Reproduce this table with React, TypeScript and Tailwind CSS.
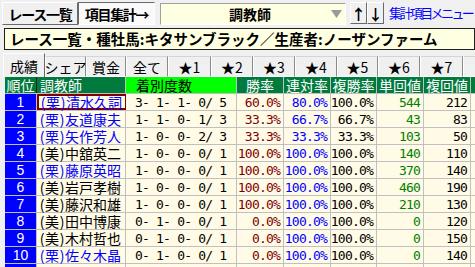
const rows = [
  { n: 1, t: "栗", name: "清水久詞", rec: "3- 1- 1- 0/ 5", w: "60.0%", r: "80.0%", p: "100.0%", tan: "544", fuku: "212" },
  { n: 2, t: "栗", name: "友道康夫", rec: "1- 1- 0- 1/ 3", w: "33.3%", r: "66.7%", p: "66.7%", tan: "43", fuku: "83" },
  { n: 3, t: "栗", name: "矢作芳人", rec: "1- 0- 0- 2/ 3", w: "33.3%", r: "33.3%", p: "33.3%", tan: "103", fuku: "50" },
  { n: 4, t: "美", name: "中舘英二", rec: "1- 0- 0- 0/ 1", w: "100.0%", r: "100.0%", p: "100.0%", tan: "140", fuku: "110" },
  { n: 5, t: "栗", name: "藤原英昭", rec: "1- 0- 0- 0/ 1", w: "100.0%", r: "100.0%", p: "100.0%", tan: "370", fuku: "140" },
  { n: 6, t: "美", name: "岩戸孝樹", rec: "1- 0- 0- 0/ 1", w: "100.0%", r: "100.0%", p: "100.0%", tan: "460", fuku: "190" },
  { n: 7, t: "美", name: "藤沢和雄", rec: "1- 0- 0- 0/ 1", w: "100.0%", r: "100.0%", p: "100.0%", tan: "210", fuku: "130" },
  { n: 8, t: "美", name: "田中博康", rec: "0- 1- 0- 0/ 1", w: "0.0%", r: "100.0%", p: "100.0%", tan: "0", fuku: "120" },
  { n: 9, t: "美", name: "木村哲也", rec: "0- 1- 0- 0/ 1", w: "0.0%", r: "100.0%", p: "100.0%", tan: "0", fuku: "150" },
  { n: 10, t: "栗", name: "佐々木晶", rec: "0- 1- 0- 0/ 1", w: "0.0%", r: "100.0%", p: "100.0%", tan: "0", fuku: "140" },
];

const tabs = [
  { label: "シェア", w: "w-[41px]" },
  { label: "賞金", w: "w-[40px]" },
  { label: "全て", w: "w-[42px]" },
  { label: "★1", w: "w-[43px]" },
  { label: "★2", w: "w-[42px]" },
  { label: "★3", w: "w-[42px]" },
  { label: "★4", w: "w-[42px]" },
  { label: "★5", w: "w-[41px]" },
  { label: "★6", w: "w-[42px]" },
  { label: "★7", w: "w-[43px]" },
  { label: "★", w: "w-[42px]" },
];

const mono = "font-['DejaVu_Sans_Mono',monospace] text-[13px] tracking-[-0.8px]";

export default function App() {
  return (
    <div className="w-[475px] h-[267px] overflow-hidden bg-[#f0f0f0] text-black font-['Noto_Sans_CJK_JP','Noto_Sans',sans-serif] leading-none">
      {/* top bar */}
      <div className="flex items-start h-[27px] pt-[2px] pl-[2px]">
        <div className="w-[76px] h-[23px] shrink-0 flex items-center justify-center border border-t-white border-l-white border-r-[#696969] border-b-[#696969] text-[14px] font-bold tracking-[-1.3px]">
          レース一覧
        </div>
        <div className="w-[77px] h-[23px] shrink-0 flex items-center justify-center border border-t-[#696969] border-l-[#696969] border-r-white border-b-white bg-[#f9f9f9] text-[14px] font-bold tracking-[-1.3px]">
          項目集計→
        </div>
        <div className="ml-[5px] mt-[1px] w-[186px] h-[22px] shrink-0 flex items-center bg-[#ffffe1] border border-t-[#a0a0a0] border-l-[#a0a0a0] border-r-white border-b-white">
          <span className="flex-1 text-center pl-[8px] text-[14px] font-bold">調教師</span>
          <svg width="11" height="8" viewBox="0 0 11 8" className="mr-[3px]">
            <path d="M0 0 L11 0 L5.5 8 Z" fill="#9a9a9a" />
          </svg>
        </div>
        <div className="ml-[4px] w-[17px] h-[22px] shrink-0 flex items-center justify-center border border-t-white border-l-white border-r-[#696969] border-b-[#696969] text-[15px] font-bold">
          ↑
        </div>
        <div className="w-[17px] h-[22px] shrink-0 flex items-center justify-center border border-t-white border-l-white border-r-[#696969] border-b-[#696969] text-[15px] font-bold">
          ↓
        </div>
        <div className="ml-[5px] mt-[4px] shrink-0 text-[13px] tracking-[-2.6px] text-[#0000ff] whitespace-nowrap">
          集計項目メニュー
        </div>
      </div>

      {/* title box */}
      <div className="ml-[4px] mt-[1px] h-[22px] flex items-center border border-[#202020] bg-[#ffffe1] pl-[5px] text-[14.5px] font-bold tracking-[0px] whitespace-nowrap overflow-hidden">
        レース一覧・種牡馬:キタサンブラック／生産者:ノーザンファーム
      </div>

      {/* tabs */}
      <div className="flex items-end h-[27px] pl-[3px] overflow-hidden">
        <div className="w-[42px] h-[24px] shrink-0 whitespace-nowrap flex items-center justify-center border-t border-l border-r border-t-white border-l-white border-r-[#696969] text-[14px]">
          成績
        </div>
        {tabs.map((tab) => (
          <div
            key={tab.label}
            className={`${tab.w} shrink-0 whitespace-nowrap h-[21px] flex items-center justify-center border-t border-r border-b border-t-[#d4d4d4] border-r-[#8a8a8a] border-b-white border-l border-l-white text-[14px]`}
          >
            {tab.label}
          </div>
        ))}
      </div>

      {/* table */}
      <div className="pl-[5px] text-[14px]">
        <div className="flex h-[17px] border-b border-[#c0c0c0]">
          <div className="w-[32px] shrink-0 whitespace-nowrap bg-[#007a3d] text-white flex items-center justify-center border-r border-[#202020]">順位</div>
          <div className="w-[89px] shrink-0 bg-[#007a3d] text-white flex items-center pl-[3px] border-r border-[#c0c0c0]">調教師</div>
          <div className="w-[111px] shrink-0 bg-[#00ff00] text-black flex items-center pl-[10px] border-r border-[#c0c0c0]">着別度数</div>
          {["勝率", "連対率", "複勝率", "単回値", "複回値"].map((h, i) => (
            <div
              key={h}
              className={`${i === 2 ? "w-[46px]" : "w-[47px]"} shrink-0 whitespace-nowrap bg-[#007a3d] text-white flex items-center justify-center border-r border-[#c0c0c0]`}
            >
              {h}
            </div>
          ))}
          <div className="w-[20px] shrink-0 bg-[#007a3d]" />
        </div>

        {rows.map((row) => (
          <div key={row.n} className="flex h-[17px] border-b border-[#c0c0c0] bg-[#fffbe6]">
            <div className="w-[32px] shrink-0 bg-[#0000ff] text-white flex items-center justify-center border-r border-[#c0c0c0] text-[14px] font-['Liberation_Sans',sans-serif]">
              {row.n}
            </div>
            <div
              className={`w-[89px] shrink-0 flex items-center border-r whitespace-nowrap ${
                row.t === "栗" ? "text-[#0000ff]" : "text-black"
              } ${row.n === 1 ? "border-2 border-[#800000] pl-[1px]" : "border-[#c0c0c0] pl-[2px]"}`}
            >
              <span className="w-[6px] shrink-0 text-center">(</span>
              <span className="shrink-0">{row.t}</span>
              <span className="w-[6px] shrink-0 text-center">)</span>
              <span className="shrink-0">{row.name}</span>
            </div>
            <div className={`w-[111px] shrink-0 flex items-center pl-[9px] border-r border-[#c0c0c0] whitespace-pre ${mono}`}>
              {row.rec}
            </div>
            <div className={`w-[47px] shrink-0 flex items-center justify-end pr-[3px] border-r border-[#c0c0c0] text-[#800000] ${mono}`}>
              {row.w}
            </div>
            <div className={`w-[47px] shrink-0 flex items-center justify-end pr-[3px] border-r border-[#c0c0c0] text-[#0000ff] ${mono}`}>
              {row.r}
            </div>
            <div className={`w-[46px] shrink-0 flex items-center justify-end pr-[3px] border-r border-[#c0c0c0] ${mono}`}>
              {row.p}
            </div>
            <div className={`w-[47px] shrink-0 flex items-center justify-end pr-[3px] border-r border-[#c0c0c0] text-[#008000] ${mono}`}>
              {row.tan}
            </div>
            <div className={`w-[47px] shrink-0 flex items-center justify-end pr-[3px] border-r border-[#c0c0c0] ${mono}`}>
              {row.fuku}
            </div>
            <div className="w-[20px] shrink-0" />
          </div>
        ))}

        <div className="flex h-[17px] bg-[#fffbe6]">
          <div className="w-[32px] shrink-0 bg-[#0000ff] border-r border-[#c0c0c0]" />
          <div className="w-[89px] shrink-0 border-r border-[#c0c0c0]" />
          <div className="w-[111px] shrink-0 border-r border-[#c0c0c0]" />
          <div className="w-[47px] shrink-0 border-r border-[#c0c0c0]" />
          <div className="w-[47px] shrink-0 border-r border-[#c0c0c0]" />
          <div className="w-[46px] shrink-0 border-r border-[#c0c0c0]" />
          <div className="w-[47px] shrink-0 border-r border-[#c0c0c0]" />
          <div className="w-[47px] shrink-0 border-r border-[#c0c0c0]" />
        </div>
      </div>
    </div>
  );
}
